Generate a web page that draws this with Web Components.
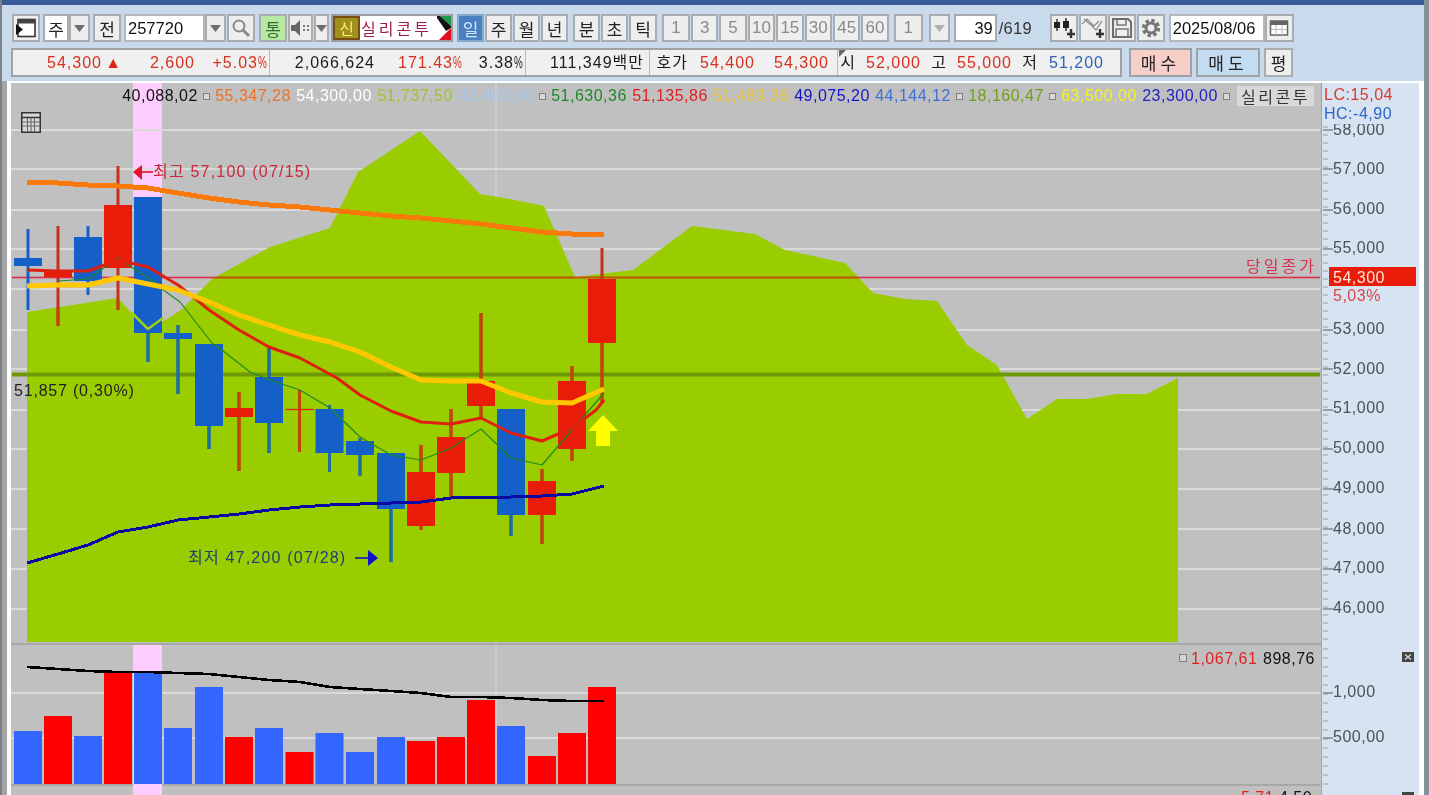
<!DOCTYPE html>
<html lang="ko">
<head>
<meta charset="utf-8">
<title>실리콘투 차트</title>
<style>
  html, body { margin: 0; height: 795px; overflow: hidden; background: #c9daec; }
</style>
</head>
<body>
<hts-app></hts-app>
<script>
const NUM_FONT = '"Liberation Sans", "Noto Sans CJK KR", sans-serif';
const KOR_FONT = '"Noto Sans CJK KR", "Liberation Sans", sans-serif';

// candles: x center, body top, body bottom, wick top, wick bottom, color
const CANDLES = [
  [28, 258, 266, 229, 310, "b"], [58, 271, 277, 226, 326, "r"], [88, 237, 281, 226, 295, "b"],
  [118, 205, 268, 166, 310, "r"], [148, 197, 333, 197, 362, "b"], [178, 333, 339, 325, 394, "b"],
  [209, 344, 426, 344, 449, "b"], [239, 408, 417, 392, 471, "r"], [269, 377, 423, 346, 453, "b"],
  [299.5, 409, 410, 390, 452, "r"], [329.5, 409, 453, 405, 472, "b"], [360, 441, 455, 438, 476, "b"],
  [391, 453, 509, 453, 562, "b"], [421, 472, 526, 445, 530, "r"], [451, 437, 473, 409, 497, "r"],
  [481, 381, 406, 313, 418, "r"], [511, 409, 515, 409, 536, "b"], [542, 481, 515, 469, 544, "r"],
  [572, 381, 449, 366, 461, "r"], [602, 279, 343, 248, 403, "r"]
];
const CLOUD = "27,312 118,298 148,331 181,310 212,279 270,247 330,228 358,172 420,131 480,194 510,199 544,206 575,277 633,270 692,226 755,234 785,250 845,263 873,293 905,299 937,301 967,345 997,365 1027,419 1057,399 1087,399 1117,394 1147,394 1178,378 1178,642 27,642";
const ORANGE = "27,182 58,183 88,185 118,186 148,188 178,193 209,198 239,202 269,205 300,207 330,210 360,213 391,216 421,218 451,221 481,224 511,228 542,232 572,234 604,235";
const YELLOW = "27,286 58,285 88,285 118,278 148,284 178,290 209,302 239,315 269,325 300,335 330,342 360,352 391,367 421,380 451,381 481,381 511,393 542,402 572,403 604,389";
const RED_MA = "27,270 58,271 88,271 118,260 148,267 178,285 197,300 209,310 239,330 269,347 300,358 337,378 360,395 391,411 421,422 451,424 481,418 511,433 542,441 572,428 596,410 604,400";
const GREEN_MA = "58,281 88,279 118,258 148,278 162,289 180,302 212,343 222,350 250,372 270,380 300,390 330,408 360,437 391,455 421,460 451,448 481,429 511,458 542,465 572,430 604,393";
const NAVY_MA = "27,563 58,554 88,545 118,532 148,527 178,520 209,517 239,514 269,510 300,507 330,505 360,504 391,503 421,502 451,498 481,497 511,497 542,496 572,494 604,486";
const VOL_MA = "27,667 58,669 88,671 118,672 148,672 178,673 209,674 239,677 269,680 300,682 330,687 360,689 391,691 421,693 451,697 481,697 511,698 542,700 572,701 604,701";
const VOLUMES = [731, 716, 736, 672, 673, 728, 687, 737, 728, 752, 733, 752, 737, 741, 737, 700, 726, 756, 733, 687];
const VOL_COLORS = "brbrbbbrbrbbbrrrbrrr";

const line = (pts, color, w, crisp) =>
  `<polyline points="${pts}" fill="none" stroke="${color}" stroke-width="${w}" stroke-linejoin="round"${crisp ? ' shape-rendering="crispEdges"' : ""}/>`;
const hline = (y, x1, x2, color, w = 2) =>
  `<rect x="${x1}" y="${y - w / 2}" width="${x2 - x1}" height="${w}" fill="${color}"/>`;

class HtsBtn extends HTMLElement {
  constructor() {
    super();
    this.attachShadow({ mode: "open" });
    this.shadowRoot.innerHTML = `
      <style>
        :host {
          display: inline-flex;
          align-items: center;
          justify-content: center;
          box-sizing: border-box;
          flex: none;
          height: 28px;
          background: #eeeeee;
          border: 2px solid #a9adb2;
          color: #222;
          font: 17px ${KOR_FONT};
          white-space: nowrap;
          overflow: hidden;
        }
        :host([kind="white"]) { background: #fff; }
        :host([kind="green"]) { background: #b9e8a0; color: #2f6a2f; }
        :host([kind="blue"]) { background: #4a80c0; color: #cfe4ff; border-color: #8aa8c8; }
        :host([kind="num"]) { color: #8a8a8a; font: 17px ${NUM_FONT}; }
        :host([kind="input"]) {
          background: #fff;
          justify-content: flex-start;
          padding-left: 2px;
          font: 16.5px ${NUM_FONT};
          color: #111;
          border-color: #b4b8bc;
        }
        :host([kind="right"]) {
          background: #fff;
          justify-content: flex-end;
          padding-right: 2px;
          font: 16.5px ${NUM_FONT};
          color: #111;
        }
      </style>
      <slot></slot>
    `;
  }
}
customElements.define("hts-btn", HtsBtn);

class HtsToolbar extends HTMLElement {
  constructor() {
    super();
    this.attachShadow({ mode: "open" });
  }

  connectedCallback() {
    const dd = `<svg width="11" height="7"><path d="M0 0H11L5.5 7Z" fill="#6f6f6f"/></svg>`;
    const ddLight = `<svg width="11" height="7"><path d="M0 0H11L5.5 7Z" fill="#b0b0b0"/></svg>`;
    const icons = {
      layout: `<svg width="22" height="22" viewBox="0 0 22 22"><rect x="3" y="2.5" width="17" height="17" fill="#fff" stroke="#333" stroke-width="1.6"/><rect x="3" y="2.5" width="17" height="4" fill="#444"/><path d="M1 7L8 12.5L1 18Z" fill="#111"/></svg>`,
      search: `<svg width="20" height="20" viewBox="0 0 20 20"><circle cx="8" cy="8" r="5.5" fill="none" stroke="#8a8a8a" stroke-width="2"/><path d="M12 12L18 18" stroke="#8a8a8a" stroke-width="3"/></svg>`,
      speaker: `<svg width="20" height="18" viewBox="0 0 20 18"><path d="M0 6H4L9 1V17L4 12H0Z" fill="#666"/><path d="M12 6h2v2h-2zM16 6h2v2h-2zM12 10h2v2h-2zM16 10h2v2h-2z" fill="#777"/></svg>`,
      candle: `<svg width="24" height="24" viewBox="0 0 24 24"><path d="M5 3V15M14 2V15" stroke="#333" stroke-width="1.5"/><rect x="2" y="6" width="6" height="6" fill="#222"/><rect x="11" y="5" width="6" height="7" fill="#222"/><path d="M19 13V22M15 18H23" stroke="#333" stroke-width="2.4"/></svg>`,
      cross: `<svg width="24" height="24" viewBox="0 0 24 24"><path d="M1 8L6 3L13 10L18 5M3 3L10 9L15 14L21 5" fill="none" stroke="#8a8a8a" stroke-width="1.2"/><path d="M19 13V22M15 18H23" stroke="#333" stroke-width="2.4"/></svg>`,
      save: `<svg width="22" height="22" viewBox="0 0 22 22"><path d="M2 2H17L20 5V20H2Z" fill="none" stroke="#6e6e6e" stroke-width="2"/><path d="M6 3V8H15V3M5 20V12H17V20" fill="none" stroke="#7a7a7a" stroke-width="1.6"/></svg>`,
      gear: `<svg width="22" height="22" viewBox="0 0 22 22"><circle cx="11" cy="11" r="7.5" fill="none" stroke="#777" stroke-width="3.4" stroke-dasharray="3.4 2.5"/><circle cx="11" cy="11" r="5" fill="none" stroke="#777" stroke-width="3"/></svg>`,
      cal: `<svg width="20" height="18" viewBox="0 0 20 18"><rect x="1.5" y="2" width="17" height="14" fill="#fff" stroke="#666" stroke-width="1.5"/><rect x="1.5" y="2" width="17" height="4" fill="#666"/><path d="M2 10.5H18M7 6V16M13 6V16" stroke="#bbb"/></svg>`
    };
    // [content, width, gap before, kind]
    const items = [
      [icons.layout, 28, 0], ["주", 26, 3, "white"], [dd, 21, 0], ["전", 28, 3],
      ["257720", 81, 3, "input"], [dd, 21, 0], [icons.search, 28, 1],
      ["통", 28, 4, "green"], [icons.speaker, 25, 1], [dd, 15, 1],
      ["STOCK", 122, 2],
      ["일", 27, 4, "blue"], ["주", 27, 1], ["월", 27, 1], ["년", 27, 1],
      ["분", 27, 5], ["초", 27, 1], ["틱", 28, 1],
      ["1", 28, 5, "num"], ["3", 27.4, 1, "num"], ["5", 27.4, 1, "num"], ["10", 27.4, 1, "num"],
      ["15", 27.4, 1, "num"], ["30", 27.4, 1, "num"], ["45", 27.4, 1, "num"], ["60", 27.4, 1, "num"],
      ["1", 29, 5, "num"], [ddLight, 21, 6],
      ["39", 43, 4, "right"], ["TEXT", 38, 2],
      [icons.candle, 28, 13], [icons.cross, 28, 1], [icons.save, 28, 1], [icons.gear, 28, 1],
      ["2025/08/06", 96, 4, "input"], [icons.cal, 29, 0]
    ];
    const html = items.map(([content, w, gap, kind]) => {
      if (content === "TEXT") return `<span class="of" style="margin-left:${gap}px;width:${w}px">/619</span>`;
      if (content === "STOCK") {
        return `<div class="stock" style="margin-left:${gap}px;width:${w}px">
            <span class="shin">신</span><span class="name">실리콘투</span>
            <svg width="14" height="24" viewBox="0 0 14 24"><path d="M3 0H14V10Z" fill="#1f9a4a"/><path d="M0 0H3L14 10V12L9 15L0 2Z" fill="#111"/><path d="M2 24L14 12V24Z" fill="#e01020"/></svg>
          </div>`;
      }
      return `<hts-btn ${kind ? `kind="${kind}"` : ""} style="margin-left:${gap}px;width:${w}px">${content}</hts-btn>`;
    }).join("");

    this.shadowRoot.innerHTML = `
      <style>
        :host { display: flex; height: 28px; padding-left: 10px; }
        .of { flex: none; font: 16.5px/28px ${NUM_FONT}; color: #333; letter-spacing: .3px; }
        .stock {
          flex: none;
          box-sizing: border-box;
          display: flex;
          align-items: center;
          height: 28px;
          background: #fff;
          border: 2px solid #9a9ea2;
          overflow: hidden;
        }
        .shin {
          flex: none;
          box-sizing: border-box;
          width: 27px;
          height: 24px;
          background: #a2901e;
          border: 2px solid #7a4e12;
          color: #f4f06a;
          font: 16px/20px ${KOR_FONT};
          text-align: center;
        }
        .name {
          flex: 1;
          padding-left: 1px;
          font: 16px ${KOR_FONT};
          letter-spacing: 3px;
          color: #a01850;
          white-space: nowrap;
        }
        svg { display: block; }
      </style>
      ${html}
    `;
  }
}
customElements.define("hts-toolbar", HtsToolbar);

class HtsQuote extends HTMLElement {
  constructor() {
    super();
    this.attachShadow({ mode: "open" });
  }

  connectedCallback() {
    const R = "#d6301f", K = "#1c1c1c", B = "#2c62b8";
    const pct = `<i class="p">%</i>`;
    // [text, right edge on the page, color, divider after]
    const cells = [
      ["54,300", 102, R], ["▲", 122, "#d82a10"], ["2,600", 195, R], [`+5.03${pct}`, 268, R, 270],
      ["2,066,624", 375, K], [`171.43${pct}`, 462, R], [`3.38${pct}`, 524, K, 526],
      ["111,349백만", 645, K, 650], ["호가", 688, K], ["54,400", 755, R], ["54,300", 830, R, 838],
      ["시", 856, K], ["52,000", 921, R], ["고", 947, K], ["55,000", 1012, R], ["저", 1038, K], ["51,200", 1104, B]
    ];
    let x = 13;
    const html = cells.map(([text, right, color, div]) => {
      const end = div || right;
      const w = end - x;
      const pad = end - right;
      x = end;
      return `<span class="${div ? "div" : ""}" style="width:${w}px;padding-right:${pad}px;color:${color}">${text}</span>`;
    }).join("");

    this.shadowRoot.innerHTML = `
      <style>
        :host { display: flex; height: 29px; padding-left: 9px; margin-top: 6px; gap: 0; }
        .box {
          flex: none;
          display: flex;
          box-sizing: border-box;
          width: 1111px;
          background: #f0f0f0;
          border: 2px solid #9ea2a6;
          overflow: hidden;
        }
        .box span {
          flex: none;
          box-sizing: border-box;
          text-align: right;
          font: 16px/25px ${NUM_FONT}, ${KOR_FONT};
          letter-spacing: 1px;
          white-space: nowrap;
        }
        .box span.div { border-right: 1px solid #b9b9b9; }
        .p {
          display: inline-block;
          width: 9px;
          font-style: normal;
          letter-spacing: 0;
          transform: scaleX(.62);
          transform-origin: left;
        }
        .corner {
          position: absolute;
          left: 828px;
          top: 2px;
          width: 0;
          height: 0;
          border-top: 7px solid #666;
          border-right: 7px solid transparent;
        }
        .wrap { position: relative; flex: none; display: flex; }
        hts-btn { height: 29px; font-size: 17px; letter-spacing: 4px; }
        .buy { margin-left: 7px; width: 63px; background: #f6cfc8; border-color: #9ea2a6; }
        .sell { margin-left: 4px; width: 64px; background: #c4dcf2; border-color: #9ea2a6; }
        .flat { margin-left: 4px; width: 29px; letter-spacing: 0; }
      </style>
      <div class="wrap"><div class="box">${html}</div><i class="corner"></i></div>
      <hts-btn class="buy">매수</hts-btn>
      <hts-btn class="sell">매도</hts-btn>
      <hts-btn class="flat">평</hts-btn>
    `;
  }
}
customElements.define("hts-quote", HtsQuote);

class HtsLegend extends HTMLElement {
  constructor() {
    super();
    this.attachShadow({ mode: "open" });
  }

  connectedCallback() {
    const vals = [
      ["40,088,02", "#111"], 0, ["55,347,28", "#e8742a"], ["54,300,00", "#fff"], ["51,737,50", "#a2c234"],
      ["43,403,00", "#a9c9ef"], 0, ["51,630,36", "#1a8a2a"], ["51,135,86", "#e01f1f"], ["51,489,36", "#eac63a"],
      ["49,075,20", "#1414c8"], ["44,144,12", "#3f70d4"], 0, ["18,160,47", "#70a020"], 0,
      ["63,500,00", "#f2f222"], ["23,300,00", "#2222c4"], 0
    ];
    this.shadowRoot.innerHTML = `
      <style>
        :host {
          position: absolute;
          top: 3px;
          right: 105px;
          display: flex;
          align-items: center;
          gap: 5px;
          height: 20px;
          font: 16px ${NUM_FONT};
          letter-spacing: .5px;
          white-space: nowrap;
        }
        i { flex: none; box-sizing: border-box; width: 7px; height: 7px; border: 1px solid #808080; background: #d8d8d8; }
        span { flex: none; width: 76px; text-align: center; }
        b {
          flex: none;
          width: 77px;
          margin-left: 2px;
          font: 400 16px ${KOR_FONT};
          letter-spacing: 2.5px;
          text-align: center;
          background: #d9d9d9;
          color: #333;
          line-height: 20px;
        }
      </style>
      ${vals.map(v => v ? `<span style="color:${v[1]}">${v[0]}</span>` : "<i></i>").join("")}
      <b>실리콘투</b>
    `;
  }
}
customElements.define("hts-legend", HtsLegend);

class HtsAxis extends HTMLElement {
  constructor() {
    super();
    this.attachShadow({ mode: "open" });
  }

  connectedCallback() {
    const top = +this.getAttribute("top");
    const h = +this.getAttribute("h");
    const labels = JSON.parse(this.getAttribute("labels") || "[]");
    const step = +this.getAttribute("step") || 8;
    const text = labels.map(([t, y, ty]) =>
      `<path d="M1 ${y}H11" stroke="#808890" stroke-width="1.5"/><text x="11" y="${ty + 6}">${t}</text>`).join("");
    let minor = "";
    for (let y = top + 4; y < top + h; y += step) minor += `<path d="M1 ${y}H6" stroke="#9aa0a8"/>`;
    this.shadowRoot.innerHTML = `
      <style>
        :host {
          display: block;
          flex: none;
          box-sizing: border-box;
          width: 98px;
          height: ${h}px;
          background: #d7e3f0;
          border-left: 1px solid #a0a4a8;
          overflow: hidden;
        }
        svg { display: block; }
        text { font: 16px ${NUM_FONT}; letter-spacing: .5px; fill: #4a525a; }
      </style>
      <svg width="97" height="${h}" viewBox="0 ${top} 97 ${h}">
        ${minor}${text}
        ${this.extra || ""}
      </svg>
    `;
  }
}
customElements.define("hts-axis", HtsAxis);

class HtsPriceAxis extends HtsAxis {
  connectedCallback() {
    this.extra = `
      <rect x="0" y="83" width="97" height="41" fill="#d7e3f0"/>
      <text x="2" y="100" style="fill:#d83a30">LC:15,04</text>
      <text x="2" y="119" style="fill:#2c66c8">HC:-4,90</text>
      <text x="11" y="301" style="fill:#d84848">5,03%</text>
      <rect x="7" y="267" width="87" height="19" fill="#e81c08"/>
      <text x="11" y="283" style="fill:#ffe6d8">54,300</text>
    `;
    super.connectedCallback();
  }
}
customElements.define("hts-price-axis", HtsPriceAxis);

class HtsPriceChart extends HTMLElement {
  constructor() {
    super();
    this.attachShadow({ mode: "open" });
  }

  connectedCallback() {
    const grid = [130, 169, 210, 249, 289, 330, 369, 410, 449, 489, 529, 569, 609]
      .map(y => hline(y, 11, 1320, "#dadada")).join("");

    const wick = (color) => CANDLES.map(c =>
      `<rect x="${c[0] - 1.5}" y="${c[3]}" width="3" height="${c[4] - c[3]}" fill="${color(c[5])}"/>`).join("");
    const bodies = CANDLES.map(c =>
      `<rect x="${c[0] - 14}" y="${c[1]}" width="28" height="${c[2] - c[1]}" fill="${c[5] === "r" ? "#e81c08" : "#1560c8"}"/>`).join("");

    const axisLabels = JSON.stringify([
      ["58,000", 130, 129], ["57,000", 169, 168], ["56,000", 210, 208], ["55,000", 249, 247],
      ["53,000", 330, 328], ["52,000", 369, 368], ["51,000", 410, 407], ["50,000", 449, 447],
      ["49,000", 489, 487], ["48,000", 529, 528], ["47,000", 569, 567], ["46,000", 609, 607]
    ]);

    this.shadowRoot.innerHTML = `
      <style>
        :host { display: flex; position: relative; height: 562px; }
        svg.plot { display: block; flex: none; background: #c0c0c0; }
        text { font: 16px ${NUM_FONT}, ${KOR_FONT}; }
        text.close { font-family: ${KOR_FONT}; letter-spacing: 3px; }
        .icon { position: absolute; left: 10px; top: 29px; display: block; }
      </style>
      <svg class="plot" width="1310" height="562" viewBox="11 83 1310 562">
        <defs><clipPath id="cloud"><polygon points="${CLOUD}"/></clipPath></defs>
        <rect x="133" y="83" width="29" height="114" fill="#ffccff"/>
        ${grid}
        <rect x="495.5" y="83" width="1" height="561" fill="#dadada"/>
        <polygon points="${CLOUD}" fill="#9acd00"/>
        <rect x="11" y="643" width="1310" height="2" fill="#a8a8a8"/>

        ${hline(277.5, 12, 1320, "#d9304a", 1.6)}
        <g clip-path="url(#cloud)">${hline(277.5, 12, 1320, "#bd5a00", 1.6)}</g>
        ${hline(374.5, 12, 1320, "#6f9a08", 4)}
        ${hline(409.5, 286, 314, "#c84a10", 1.4)}

        ${wick(k => k === "r" ? "#c8301e" : "#1560c8")}
        <g clip-path="url(#cloud)">${wick(k => k === "r" ? "#c24408" : "#1f6e9e")}</g>
        ${bodies}

        ${line("132,313 148,329 163,318", "#9ecf10", 2.5)}
        ${line(ORANGE, "#f97a0a", 5, true)}
        ${line(GREEN_MA, "#1f8a20", 1.2)}
        ${line(NAVY_MA, "#0a0aa6", 3, true)}
        ${line(RED_MA, "#e0200f", 3)}
        ${line(YELLOW, "#ffc800", 5)}

        <polygon points="603,415 618,431 610,431 610,446 596,446 596,431 588,431" fill="#ffff00"/>

        <path d="M139 172H153" stroke="#e8102a" stroke-width="1.6"/>
        <polygon points="133,172 142,165 142,180" fill="#e8102a"/>
        <text x="153" y="177" fill="#c8283c" style="letter-spacing:1.2px">최고 57,100 (07/15)</text>

        <text x="188" y="563" fill="#1f3f7a" style="letter-spacing:1.2px">최저 47,200 (07/28)</text>
        <path d="M355 558H371" stroke="#1010c8" stroke-width="1.6"/>
        <polygon points="378,558 368,550 368,566" fill="#1010c8"/>

        <text x="14" y="396" fill="#222" style="letter-spacing:.8px">51,857 (0,30%)</text>
        <text class="close" x="1246" y="272" fill="#d83050">당일종가</text>
      </svg>
      <hts-price-axis top="83" h="562" labels='${axisLabels}'></hts-price-axis>
      <hts-legend></hts-legend>
      <svg class="icon" width="20" height="21" viewBox="0 0 20 21">
        <rect x=".75" y=".75" width="18.5" height="19.5" fill="#d8d8d8" stroke="#333" stroke-width="1.5"/>
        <path d="M1 5.5H19" stroke="#333" stroke-width="1.5"/>
        <path d="M6.5 6V20M10 6V20M13.5 6V20M1 10H19M1 14H19" stroke="#666"/>
      </svg>
    `;
  }
}
customElements.define("hts-price-chart", HtsPriceChart);

class HtsVolumeChart extends HTMLElement {
  constructor() {
    super();
    this.attachShadow({ mode: "open" });
  }

  connectedCallback() {
    const volBars = VOLUMES.map((top, i) =>
      `<rect x="${CANDLES[i][0] - 14}" y="${top}" width="28" height="${784 - top}" fill="${VOL_COLORS[i] === "r" ? "#ff0000" : "#3366ff"}"/>`).join("");

    this.shadowRoot.innerHTML = `
      <style>
        :host { display: flex; height: 141px; }
        svg.plot { display: block; flex: none; background: #c0c0c0; }
        text { font: 16px ${NUM_FONT}; letter-spacing: .5px; }
        .pane { position: relative; }
        .btn { position: absolute; right: 5px; top: 7px; display: block; }
      </style>
      <svg class="plot" width="1310" height="141" viewBox="11 645 1310 141">
        <rect x="133" y="645" width="29" height="141" fill="#ffccff"/>
        ${hline(693, 11, 1320, "#dadada")}
        ${hline(738, 11, 1320, "#dadada")}
        <rect x="495.5" y="645" width="1" height="140" fill="#dadada"/>
        ${volBars}
        ${hline(785, 11, 133, "#a8a8a8")}
        ${hline(785, 162, 1320, "#a8a8a8")}
        ${line(VOL_MA, "#000", 2.6, true)}
        <rect x="1179.5" y="654.5" width="7" height="7" fill="#d4d4d4" stroke="#808080"/>
        <text x="1191" y="664" fill="#e01f1f">1,067,61</text>
        <text x="1263" y="664" fill="#111">898,76</text>
      </svg>
      <div class="pane">
        <hts-axis top="645" h="141" step="9" labels='[["1,000",693,691],["500,00",738,736]]'></hts-axis>
        <svg class="btn" width="12" height="10" viewBox="0 0 12 10"><rect width="12" height="10" fill="#444"/><path d="M3 2.5L9 7.5M9 2.5L3 7.5" stroke="#ddd" stroke-width="1.2"/></svg>
      </div>
    `;
  }
}
customElements.define("hts-volume-chart", HtsVolumeChart);

class HtsIndicatorStub extends HTMLElement {
  constructor() {
    super();
    this.attachShadow({ mode: "open" });
    this.shadowRoot.innerHTML = `
      <style>
        :host { display: flex; height: 9px; overflow: hidden; }
        .plot { position: relative; flex: none; width: 1310px; background: #c0c0c0; overflow: hidden; }
        .pink { position: absolute; left: 122px; top: 0; bottom: 0; width: 29px; background: #ffccff; }
        .val { position: absolute; top: 5px; font: 16px/14px ${NUM_FONT}; letter-spacing: .5px; }
        .axis { position: relative; flex: none; box-sizing: border-box; width: 98px; background: #d7e3f0; border-left: 1px solid #a0a4a8; }
        .btn { position: absolute; right: 5px; top: 6px; width: 12px; height: 10px; background: #444; }
      </style>
      <div class="plot">
        <i class="pink"></i>
        <span class="val" style="left:1230px;color:#e01f1f">5,71</span>
        <span class="val" style="left:1268px;color:#111">4,50</span>
      </div>
      <div class="axis"><i class="btn"></i></div>
    `;
  }
}
customElements.define("hts-indicator-stub", HtsIndicatorStub);

class HtsApp extends HTMLElement {
  constructor() {
    super();
    this.attachShadow({ mode: "open" });
    this.shadowRoot.innerHTML = `
      <style>
        :host {
          display: block;
          box-sizing: border-box;
          height: 795px;
          background: #c9daec;
          border-left: 2px solid #7c8088;
          border-right: 5px solid #8a9098;
          overflow: hidden;
          filter: blur(.4px);
        }
        .title { height: 5px; margin: 0 -5px 9px -2px; background: #3a5a9a; }
        .frame {
          margin-top: 4px;
          box-sizing: border-box;
          height: 714px;
          background: #fff;
          border-left: 5px solid #a4a4a4;
          padding: 2px 5px 0 4px;
        }
      </style>
      <div class="title"></div>
      <hts-toolbar></hts-toolbar>
      <hts-quote></hts-quote>
      <div class="frame">
        <hts-price-chart></hts-price-chart>
        <hts-volume-chart></hts-volume-chart>
        <hts-indicator-stub></hts-indicator-stub>
      </div>
    `;
  }
}
customElements.define("hts-app", HtsApp);
</script>
</body>
</html>
